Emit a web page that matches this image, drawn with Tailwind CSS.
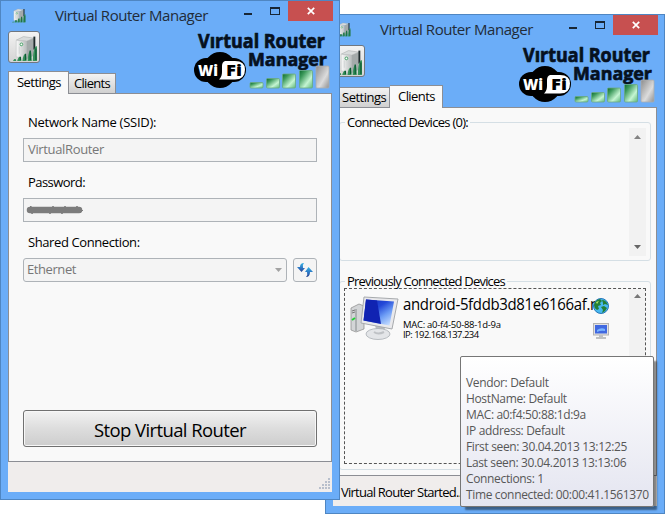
<!DOCTYPE html>
<html lang="en">
<head>
<meta charset="utf-8">
<title>Virtual Router Manager</title>
<script src="https://cdn.jsdelivr.net/npm/@tailwindcss/browser@4"></script>
</head>
<body class="relative h-[514px] w-[665px] overflow-hidden bg-white font-['Open_Sans',sans-serif] text-black">

<svg class="absolute h-0 w-0">
  <defs>
    <linearGradient id="bar" x1="0" y1="0" x2="1" y2="1"><stop offset="0" stop-color="#0d6b30"/><stop offset=".25" stop-color="#3d9a5c"/><stop offset=".65" stop-color="#c5f5d2"/><stop offset="1" stop-color="#5cb67a"/></linearGradient>
    <linearGradient id="off" x1="0" y1="0" x2="1" y2="1"><stop offset="0" stop-color="#8c8c8c"/><stop offset=".6" stop-color="#dcdcdc"/><stop offset="1" stop-color="#909090"/></linearGradient>
    <linearGradient id="case" x1="0" y1="0" x2="1" y2="0"><stop offset="0" stop-color="#fafafa"/><stop offset="1" stop-color="#b9bdbd"/></linearGradient>
    <linearGradient id="screen" x1="0" y1="0" x2=".8" y2="1"><stop offset="0" stop-color="#1226b4"/><stop offset=".42" stop-color="#2348d8"/><stop offset=".7" stop-color="#6c9cf5"/><stop offset="1" stop-color="#c4dcff"/></linearGradient>
    <linearGradient id="arrow" x1="0" y1="0" x2="0" y2="1"><stop offset="0" stop-color="#37b4e4"/><stop offset=".6" stop-color="#2a6fc0"/><stop offset="1" stop-color="#29418c"/></linearGradient>
  </defs>
  <symbol id="router" viewBox="0 0 26 26">
    <path d="M5 6 12 2.500 22 4 15 7Z" fill="#d9dcdc" stroke="#a5a9a9" stroke-width=".5"/>
    <path d="M5 6 15 7V24L5 22Z" fill="url(#case)" stroke="#b8bcbc" stroke-width=".5"/>
    <path d="M15 7 22 4V21L15 24Z" fill="#a4aaaa"/>
    <path d="M8 12V19M11 12V20" stroke="#d2d6d6"/>
    <circle cx="10" cy="10" r="1.300" fill="#fff" stroke="#3a9b5c" stroke-width=".9"/>
    <path d="M22.500 2.500V15" stroke="#1f2b2d" stroke-width="1.800"/>
    <path d="M2 26C3 23.500 5 23.500 5 26ZM6 26C7 21 10 20 10 26ZM11 26C12 18 15 16 15 26ZM16 26C17 14 20 12 20 26ZM21 26C21.500 15 23 11 25 12V26Z" fill="#36905a"/>
    <path d="M9 25V22M14 25V19M18.500 25V16M24 25V14" stroke="#0d5b35" stroke-width="1.200"/>
  </symbol>
  <symbol id="logo" viewBox="0 0 140 60">
    <g font-family="Open Sans" font-weight="700" fill="#06111f" stroke="#06111f" stroke-width=".7" stroke-linejoin="round">
      <text x="4" y="16" font-size="19" textLength="127" lengthAdjust="spacingAndGlyphs">Vırtual Router</text>
      <text x="54" y="34" font-size="18" textLength="79" lengthAdjust="spacingAndGlyphs">Manager</text>
    </g>
    <ellipse cx="26" cy="38" rx="16.500" ry="18" fill="#000"/>
    <rect x="0" y="26" width="52" height="24" rx="12" fill="#000"/>
    <path d="M31 29H41Q51 29 51 37.500 51 47.500 41 47.500H25Q28 45 28 40V34Q28 30 31 29Z" fill="#fff"/>
    <g font-family="Open Sans" font-weight="800" font-size="15.500">
      <text x="4" y="43.700" fill="#fff" textLength="20" lengthAdjust="spacingAndGlyphs">Wi</text>
      <text x="32" y="43.700" fill="#000" textLength="16" lengthAdjust="spacingAndGlyphs">Fi</text>
    </g>
    <g stroke="#69a982" stroke-width=".8" fill="url(#bar)">
      <rect x="56" y="50.500" width="13" height="5.500" rx="1"/>
      <rect x="72.500" y="46.500" width="13" height="9.500" rx="1"/>
      <rect x="88.500" y="42" width="13" height="14" rx="1"/>
      <rect x="105.500" y="38.500" width="13" height="17.500" rx="1"/>
    </g>
    <rect x="122" y="34" width="13" height="22" rx="1" fill="url(#off)" stroke="#a9adb0" stroke-width=".8"/>
  </symbol>
</svg>

<!-- Clients window -->
<section class="absolute left-[325px] top-[14px] flex h-[500px] w-[340px] flex-col border border-[#4f86c2] bg-[#6badf8] px-[7px] pb-[7px]">
  <header class="relative flex h-[92px] shrink-0 flex-col">
    <div class="flex h-[29px] items-start">
      <svg class="ml-[3px] mt-[6px] h-[16px] w-[15px]"><use href="#router"/></svg>
      <h1 class="ml-[29px] mt-[4px] w-[153px] whitespace-nowrap text-[15px] leading-5 tracking-[-0.45px] text-[#222c38]">Virtual Router Manager</h1>
      <div class="-mr-px ml-auto flex h-5 items-start">
        <span class="mr-[18px] mt-[12px] h-[2px] w-2 bg-[#182635]"></span>
        <span class="mr-[8px] mt-[6px] h-2 w-[10px] border border-t-2 border-[#182635]"></span>
        <span class="flex h-5 w-[45px] items-center justify-center bg-[#c75050]"><svg class="h-2 w-2" viewBox="0 0 8 8"><path d="M.8.8 7.200 7.200M7.200.8.8 7.200" stroke="#fff" stroke-width="1.700"/></svg></span>
      </div>
    </div>
    <button class="mt-[1px] flex h-8 w-8 items-center justify-center rounded-[3px] border border-[#707780] bg-linear-to-b from-[#f3f3f3] to-[#d4d4d4]"><svg class="h-[27px] w-[27px]"><use href="#router"/></svg></button>
    <svg class="absolute left-[186px] top-[31px] h-[60px] w-[140px] overflow-visible"><use href="#logo"/></svg>
    <nav class="mt-auto flex items-end">
      <span class="ml-[2px] flex h-[20px] w-[55px] items-center border border-b-0 border-[#8c8e94] bg-linear-to-b from-[#f3f3f3] to-[#d0d0d0] pl-[6px] text-[13px] leading-none tracking-[-0.5px]">Settings</span>
      <span class="relative -mb-px flex h-[23px] w-[53px] items-center border border-b-0 border-l-0 border-[#8c8e94] bg-[#f9f9f9] pb-[1px] pl-[8px] text-[13px] leading-none tracking-[-0.55px]">Clients</span>
    </nav>
  </header>
  <main class="flex h-[369px] shrink-0 flex-col border border-[#8c8e94] bg-[#f9f9f9] px-[5px] pt-[6px]">
    <fieldset class="h-[147px] rounded-[3px] border border-[#d5dfe5] pr-[4px]">
      <legend class="ml-[5px] h-4 whitespace-nowrap px-[2px] text-[13px] leading-4 tracking-[-0.72px]">Connected Devices (0):</legend>
      <div class="ml-auto -mt-[2px] flex h-[128px] w-[17px] flex-col items-center justify-between bg-[#f2f2f2] py-[7px]">
        <svg class="h-1 w-[7px]"><path d="M0 4 3.500 0 7 4Z" fill="#838383"/></svg>
        <svg class="h-1 w-[7px]"><path d="M0 0 3.500 4 7 0Z" fill="#666"/></svg>
      </div>
    </fieldset>
    <fieldset class="mt-[12px] h-[197px] rounded-[3px] border border-[#d5dfe5] pl-[4px] pr-[4px]">
      <legend class="ml-[1px] h-4 whitespace-nowrap px-[2px] text-[13px] leading-4 tracking-[-0.8px]">Previously Connected Devices</legend>
      <div class="-mt-px flex h-[176px] border border-dashed border-[#555]">
        <svg class="ml-[5px] mt-[7px] h-[46px] w-[50px] shrink-0" viewBox="0 0 50 46">
          <path d="M1 12 9 8 14 10V33L6 36 1 34Z" fill="#d3d5d7" stroke="#888" stroke-width=".7"/>
          <path d="M6 13V35" stroke="#848a8c"/><path d="M2 15 5 14M2 17 5 16" stroke="#777"/><path d="M2 24 5 22" stroke="#23cf35" stroke-width="2"/>
          <path d="M25 29 35 31 34 38 27 38Z" fill="#b9bcc0"/>
          <ellipse cx="28" cy="38" rx="12" ry="5.500" fill="#e3e5e8" stroke="#aaafb4" stroke-width=".8"/>
          <path d="M24 36Q28 39 34 36" stroke="#bec1c5" stroke-width="2" fill="none"/>
          <path d="M14 1 48 3 42 33 11 27Z" fill="#e9e9ec" stroke="#a7aaad"/>
          <path d="M16 3.500 44 5.500 39.500 29.500 13.500 24.500Z" fill="url(#screen)"/>
          <path d="M16 3.500 27 4.500 31 28 13.500 24.500Z" fill="#1023b2"/>
        </svg>
        <div class="ml-[3px] w-[190px] pt-[4px]">
          <p class="h-[25px] origin-left scale-x-[.935] whitespace-nowrap text-[16px] leading-[22px] tracking-[-0.35px]">android-5fddb3d81e6166af.n</p>
          <p class="whitespace-nowrap pt-[2px] text-[9.500px] leading-[10px] tracking-[-0.28px]">MAC: a0-f4-50-88-1d-9a</p>
          <p class="whitespace-nowrap text-[9.500px] leading-[10px] tracking-[-0.55px]">IP: 192.168.137.234</p>
        </div>
        <div class="relative flex w-4 shrink-0 flex-col gap-[9px] pt-[9px]">
          <svg class="h-4 w-4" viewBox="0 0 16 16"><circle cx="8" cy="8" r="7.500" fill="#47b8ef" stroke="#2777b8"/><path d="M1 7Q2 2 7 1L9 3 7 5 8 7 5 8 6 11 4 12Q1 10 1 7M9 2Q13 2 15 7L12 6 10 7 10 5ZM8 9 11 8 14 10Q13 13 9 15L10 12Z" fill="#247f35"/><path d="M3 4 6 3 4 6Z" fill="#b5e66b"/></svg>
          <svg class="h-4 w-4" viewBox="0 0 16 16"><rect x=".5" y=".5" width="15" height="11.500" fill="#e1e1e3" stroke="#b4b3b2"/><rect x="2" y="2" width="12" height="8.500" fill="#4068e0"/><path d="M4 7Q8 4 12 6V8Q8 7 4 9Z" fill="#78b4ff"/><path d="M6 12H10V14H13V16H3V14H6Z" fill="#bfc1c2"/></svg>
        </div>
        <div class="ml-auto flex w-4 flex-col items-center bg-[#f2f2f2] pt-[5px]"><svg class="h-1 w-[7px]"><path d="M0 4 3.500 0 7 4Z" fill="#777"/></svg></div>
      </div>
    </fieldset>
  </main>
  <footer class="flex grow items-center bg-[#f0edec] pl-[8px] pt-[2px] text-[13px] leading-4 tracking-[-0.75px]">Virtual Router Started...</footer>
</section>

<!-- Settings window -->
<section class="absolute left-0 top-0 flex h-[500px] w-[340px] flex-col border border-[#4f86c2] bg-[#6badf8] px-[7px] pb-[7px]">
  <header class="relative flex h-[92px] shrink-0 flex-col">
    <div class="flex h-[29px] items-start">
      <svg class="ml-[3px] mt-[6px] h-[16px] w-[15px]"><use href="#router"/></svg>
      <h1 class="ml-[29px] mt-[4px] w-[153px] whitespace-nowrap text-[15px] leading-5 tracking-[-0.45px] text-[#222c38]">Virtual Router Manager</h1>
      <div class="-mr-px ml-auto flex h-5 items-start">
        <span class="mr-[18px] mt-[12px] h-[2px] w-2 bg-[#182635]"></span>
        <span class="mr-[8px] mt-[6px] h-2 w-[10px] border border-t-2 border-[#182635]"></span>
        <span class="flex h-5 w-[45px] items-center justify-center bg-[#c75050]"><svg class="h-2 w-2" viewBox="0 0 8 8"><path d="M.8.8 7.200 7.200M7.200.8.8 7.200" stroke="#fff" stroke-width="1.700"/></svg></span>
      </div>
    </div>
    <button class="mt-[1px] flex h-8 w-8 items-center justify-center rounded-[3px] border border-[#707780] bg-linear-to-b from-[#f3f3f3] to-[#d4d4d4]"><svg class="h-[27px] w-[27px]"><use href="#router"/></svg></button>
    <svg class="absolute left-[186px] top-[31px] h-[60px] w-[140px] overflow-visible"><use href="#logo"/></svg>
    <nav class="mt-auto flex items-end">
      <span class="relative -mb-px flex h-[23px] w-[61px] items-center border border-b-0 border-[#8c8e94] bg-[#f9f9f9] pb-[1px] pl-[8px] text-[13px] leading-none tracking-[-0.55px]">Settings</span>
      <span class="flex h-[20px] w-[47px] items-center border border-b-0 border-l-0 border-[#8c8e94] bg-linear-to-b from-[#f3f3f3] to-[#d0d0d0] pl-[5px] text-[13px] leading-none tracking-[-0.7px]">Clients</span>
    </nav>
  </header>
  <main class="flex h-[369px] shrink-0 flex-col border border-[#8c8e94] bg-[#f9f9f9] px-[14px] pt-[20px]">
    <label class="h-[24px] whitespace-nowrap pl-[5px] text-[13px] leading-[17px] tracking-[-0.25px]">Network Name (SSID):</label>
    <div class="flex h-6 items-center border border-[#aeb3b8] bg-[#f4f4f4] pl-[4px] text-[13px] tracking-[-0.35px] text-[#777]">VirtualRouter</div>
    <label class="mt-[12px] h-[24px] pl-[5px] text-[13px] leading-[17px] tracking-[-0.55px]">Password:</label>
    <div class="flex h-6 items-center border border-[#aeb3b8] bg-[#f4f4f4] pl-[2px]">
      <svg class="h-[10px] w-[58px]" viewBox="0 0 58 10" fill="none" stroke="#7c7c7c"><path d="M4 5H53" stroke-width="6.500" stroke-linecap="round"/><path d="M2 4 5 1 6 9 9 2 12 8 15 2 18 8 21 2 24 9 27 1 30 8 33 2 36 9 39 1 42 8 45 2 48 8 51 1 54 8 57 5"/></svg>
    </div>
    <label class="mt-[12px] h-[24px] pl-[5px] text-[13px] leading-[17px] tracking-[-0.4px]">Shared Connection:</label>
    <div class="flex h-6 gap-[6px]">
      <div class="flex w-[264px] items-center justify-between rounded-[3px] border border-[#aeb3b8] bg-[#f4f4f4] pl-[3px] pr-[4px] text-[13px] tracking-[-0.42px] text-[#777]">Ethernet<svg class="h-1 w-[7px]"><path d="M0 0 3.500 4 7 0Z" fill="#a2a2a2"/></svg></div>
      <button class="flex w-6 items-center justify-center rounded-[3px] border border-[#aeb3b8] bg-[#f4f4f4]"><svg class="h-4 w-4" viewBox="0 0 16 16" fill="url(#arrow)"><path d="M7 1Q3 1 3 5H0L4.500 10 8 6H6Q5 3 7 1Z"/><path d="M9 15Q13 15 13 10H16L11.500 5 8 10H10Q11 13 9 15Z"/></svg></button>
    </div>
    <button class="mt-[128px] h-[37px] rounded-[3px] border border-[#707070] bg-linear-to-b from-[#f2f2f2] from-0% via-[#dddddd] via-50% to-[#cdcdcd] pt-px text-[18.500px] leading-[35px] tracking-[-0.6px] shadow-[inset_0_0_0_1px_#f7f7f7]">Stop Virtual Router</button>
  </main>
  <footer class="flex grow items-end justify-end bg-[#f0edec] p-[2px]"><svg class="h-[12px] w-[12px]" viewBox="0 0 12 12"><path d="M10 1h2M7 4h2M10 4h2M4 7h2M7 7h2M10 7h2M1 10h2M4 10h2M7 10h2M10 10h2" stroke="#b8bfcc" stroke-width="2"/></svg></footer>
</section>

<!-- Device tooltip -->
<aside class="absolute left-[460px] top-[356px] h-[151px] w-[194px] whitespace-nowrap rounded-[2px] border border-[#767676] bg-linear-to-b from-white to-[#e4e5f0] pl-[5px] pt-[18px] text-[12px] leading-4 tracking-[-0.35px] text-[#575757] shadow-[4px_4px_2px_-1px_rgba(0,0,0,0.45)]">
  <p>Vendor: Default</p><p>HostName: Default</p><p>MAC: a0:f4:50:88:1d:9a</p><p>IP address: Default</p><p>First seen: 30.04.2013 13:12:25</p><p>Last seen: 30.04.2013 13:13:06</p><p>Connections: 1</p><p>Time connected: 00:00:41.1561370</p>
</aside>
</body>
</html>
